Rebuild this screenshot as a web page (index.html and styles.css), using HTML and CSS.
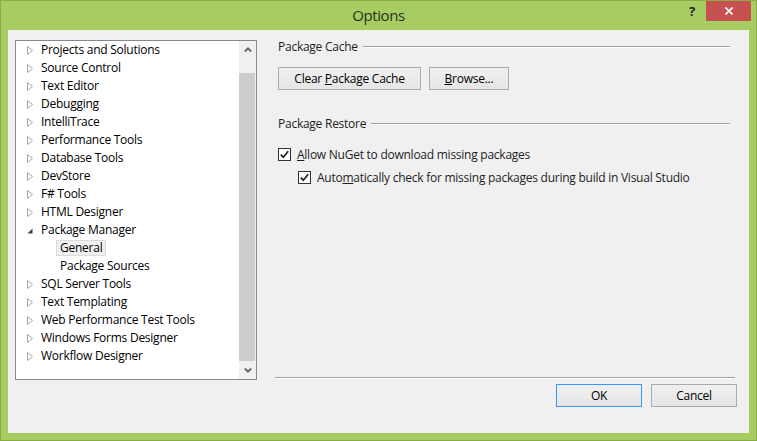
FILE: index.html
```html
<!DOCTYPE html>
<html lang="en">
<head>
    <meta charset="UTF-8">
    <meta name="viewport" content="width=device-width, initial-scale=1.0">
    <title>Options</title>
    <link rel="stylesheet" href="styles.css">
</head>
<body>

    <div class="window">
        <div class="titlebar">
            <span></span>
            <span class="title">Options</span>
            <div class="caption-buttons">
                <span class="help">?</span>
                <span class="close">
                    <svg width="8" height="8" viewBox="0 0 8 8"><path d="M0.5 0.5 L7.5 7.5 M7.5 0.5 L0.5 7.5" stroke="#fff" stroke-width="1.6"/></svg>
                </span>
            </div>
        </div>

        <div class="client">
            <div class="main">
                <!-- Options tree -->
                <div class="tree">
                    <ul class="tree-items">
                        <li class="node"><span class="expander"><svg width="6" height="9" viewBox="0 0 6 9"><path d="M0.5 0.5 L5.5 4.5 L0.5 8.5 Z" fill="#fff" stroke="#a6a6a6"/></svg></span>Projects and Solutions</li>
                        <li class="node"><span class="expander"><svg width="6" height="9" viewBox="0 0 6 9"><path d="M0.5 0.5 L5.5 4.5 L0.5 8.5 Z" fill="#fff" stroke="#a6a6a6"/></svg></span>Source Control</li>
                        <li class="node"><span class="expander"><svg width="6" height="9" viewBox="0 0 6 9"><path d="M0.5 0.5 L5.5 4.5 L0.5 8.5 Z" fill="#fff" stroke="#a6a6a6"/></svg></span>Text Editor</li>
                        <li class="node"><span class="expander"><svg width="6" height="9" viewBox="0 0 6 9"><path d="M0.5 0.5 L5.5 4.5 L0.5 8.5 Z" fill="#fff" stroke="#a6a6a6"/></svg></span>Debugging</li>
                        <li class="node"><span class="expander"><svg width="6" height="9" viewBox="0 0 6 9"><path d="M0.5 0.5 L5.5 4.5 L0.5 8.5 Z" fill="#fff" stroke="#a6a6a6"/></svg></span>IntelliTrace</li>
                        <li class="node"><span class="expander"><svg width="6" height="9" viewBox="0 0 6 9"><path d="M0.5 0.5 L5.5 4.5 L0.5 8.5 Z" fill="#fff" stroke="#a6a6a6"/></svg></span>Performance Tools</li>
                        <li class="node"><span class="expander"><svg width="6" height="9" viewBox="0 0 6 9"><path d="M0.5 0.5 L5.5 4.5 L0.5 8.5 Z" fill="#fff" stroke="#a6a6a6"/></svg></span>Database Tools</li>
                        <li class="node"><span class="expander"><svg width="6" height="9" viewBox="0 0 6 9"><path d="M0.5 0.5 L5.5 4.5 L0.5 8.5 Z" fill="#fff" stroke="#a6a6a6"/></svg></span>DevStore</li>
                        <li class="node"><span class="expander"><svg width="6" height="9" viewBox="0 0 6 9"><path d="M0.5 0.5 L5.5 4.5 L0.5 8.5 Z" fill="#fff" stroke="#a6a6a6"/></svg></span>F# Tools</li>
                        <li class="node"><span class="expander"><svg width="6" height="9" viewBox="0 0 6 9"><path d="M0.5 0.5 L5.5 4.5 L0.5 8.5 Z" fill="#fff" stroke="#a6a6a6"/></svg></span>HTML Designer</li>
                        <li class="node"><span class="expander"><svg width="6" height="6" viewBox="0 0 6 6"><path d="M5.5 0.5 L5.5 5.5 L0.5 5.5 Z" fill="#404040"/></svg></span>Package Manager</li>
                        <li class="node child"><span class="label selected">General</span></li>
                        <li class="node child"><span class="label">Package Sources</span></li>
                        <li class="node"><span class="expander"><svg width="6" height="9" viewBox="0 0 6 9"><path d="M0.5 0.5 L5.5 4.5 L0.5 8.5 Z" fill="#fff" stroke="#a6a6a6"/></svg></span>SQL Server Tools</li>
                        <li class="node"><span class="expander"><svg width="6" height="9" viewBox="0 0 6 9"><path d="M0.5 0.5 L5.5 4.5 L0.5 8.5 Z" fill="#fff" stroke="#a6a6a6"/></svg></span>Text Templating</li>
                        <li class="node"><span class="expander"><svg width="6" height="9" viewBox="0 0 6 9"><path d="M0.5 0.5 L5.5 4.5 L0.5 8.5 Z" fill="#fff" stroke="#a6a6a6"/></svg></span>Web Performance Test Tools</li>
                        <li class="node"><span class="expander"><svg width="6" height="9" viewBox="0 0 6 9"><path d="M0.5 0.5 L5.5 4.5 L0.5 8.5 Z" fill="#fff" stroke="#a6a6a6"/></svg></span>Windows Forms Designer</li>
                        <li class="node"><span class="expander"><svg width="6" height="9" viewBox="0 0 6 9"><path d="M0.5 0.5 L5.5 4.5 L0.5 8.5 Z" fill="#fff" stroke="#a6a6a6"/></svg></span>Workflow Designer</li>
                    </ul>
                    <div class="scrollbar">
                        <span class="arrow"><svg width="8" height="5" viewBox="0 0 8 5"><path d="M0.8 4.5 L4 1.3 L7.2 4.5" fill="none" stroke="#606060" stroke-width="1.8"/></svg></span>
                        <div class="track"><div class="thumb"></div></div>
                        <span class="arrow"><svg width="8" height="5" viewBox="0 0 8 5"><path d="M0.8 0.5 L4 3.7 L7.2 0.5" fill="none" stroke="#606060" stroke-width="1.8"/></svg></span>
                    </div>
                </div>

                <!-- Package Manager / General page -->
                <div class="page">
                    <div class="group-title"><span>Package Cache</span><span class="rule"></span></div>
                    <div class="button-row">
                        <button class="btn btn-clear">Clear <u>P</u>ackage Cache</button>
                        <button class="btn btn-browse"><u>B</u>rowse...</button>
                    </div>

                    <div class="group-title restore"><span>Package Restore</span><span class="rule"></span></div>
                    <label class="check first">
                        <span class="box"><svg width="11" height="11" viewBox="0 0 11 11"><path d="M1.8 5.6 L4.3 8.2 L9.2 2.2" fill="none" stroke="#222" stroke-width="1.7"/></svg></span>
                        <span><u>A</u>llow NuGet to download missing packages</span>
                    </label>
                    <label class="check nested">
                        <span class="box"><svg width="11" height="11" viewBox="0 0 11 11"><path d="M1.8 5.6 L4.3 8.2 L9.2 2.2" fill="none" stroke="#222" stroke-width="1.7"/></svg></span>
                        <span>Auto<u>m</u>atically check for missing packages during build in Visual Studio</span>
                    </label>

                    <div class="separator"></div>
                </div>
            </div>

            <div class="dialog-buttons">
                <button class="btn btn-default">OK</button>
                <button class="btn">Cancel</button>
            </div>
        </div>
    </div>

</body>
</html>
```

FILE: styles.css
```css
/* Windows 8 style Options dialog */
* {
    box-sizing: border-box;
}
body {
    margin: 0;
    font-family: "Segoe UI", "Open Sans", "Noto Sans", sans-serif;
    font-size: 12px;
    letter-spacing: -0.25px;
    color: #000;
}
.window {
    width: 757px;
    height: 441px;
    background-color: #a7cd62;
    border: 1px solid #88ad48;
}
.titlebar {
    height: 29px;
    display: grid;
    grid-template-columns: 1fr auto 1fr;
}
.title {
    font-size: 15px;
    letter-spacing: -0.4px;
    line-height: 28px;
    color: #27321c;
}
.caption-buttons {
    display: flex;
    justify-content: flex-end;
    align-items: flex-start;
    padding-right: 5px;
}
.help {
    font-weight: bold;
    font-size: 13px;
    line-height: 20px;
    color: #222;
    margin-right: 11px;
}
.close {
    width: 45px;
    height: 20px;
    background-color: #c75050;
    display: flex;
    align-items: center;
    justify-content: center;
}
.client {
    margin: 0 7px;
    height: 403px;
    background-color: #f0f0f0;
}
.main {
    display: flex;
    gap: 18px;
    height: 350px;
    padding: 10px 14px 0 7px;
}

/* Tree view */
.tree {
    width: 242px;
    height: 340px;
    border: 1px solid #828790;
    background-color: #fff;
    display: flex;
}
.tree-items {
    list-style: none;
    margin: 0;
    padding: 0;
    flex: 1;
}
.node {
    height: 18px;
    display: flex;
    align-items: center;
    padding-left: 11px;
    padding-bottom: 2px;
    white-space: nowrap;
}
.expander {
    width: 14px;
    display: flex;
    align-items: center;
    padding-top: 3px;
}
.node.child {
    padding-left: 40px;
    padding-bottom: 0;
}
.label {
    height: 16px;
    line-height: 13px;
    padding: 0 3px;
    border: 1px solid transparent;
}
.label.selected {
    background-color: #f0f0f0;
    border-color: #dadada;
}
.scrollbar {
    width: 17px;
    background-color: #f0f0f0;
    display: flex;
    flex-direction: column;
}
.arrow {
    height: 17px;
    display: flex;
    align-items: center;
    justify-content: center;
}
.track {
    flex: 1;
    padding-top: 15px;
}
.thumb {
    height: 288px;
    margin: 0 1px 0 0;
    background-color: #cdcdcd;
}

/* Options page */
.page {
    width: 460px;
    height: 340px;
    display: flex;
    flex-direction: column;
    color: #1e1e1e;
}
.group-title {
    display: flex;
    align-items: center;
    line-height: 13px;
    padding-left: 3px;
}
.group-title.restore {
    margin-top: 27px;
}
.rule {
    flex: 1;
    height: 2px;
    margin: 0 5px 0 5px;
    border-top: 1px solid #a0a0a0;
    border-bottom: 1px solid #fff;
}
.button-row {
    display: flex;
    gap: 8px;
    margin-top: 14px;
    padding-left: 3px;
}
.btn {
    font-family: inherit;
    font-size: 12px;
    letter-spacing: -0.25px;
    color: #000;
    height: 23px;
    padding: 0;
    border: 1px solid #acacac;
    background: linear-gradient(#f0f0f0, #e5e5e5);
}
.btn-clear {
    width: 143px;
}
.btn-browse {
    width: 80px;
}
.check {
    display: flex;
    align-items: center;
    gap: 6px;
    height: 17px;
}
.check.first {
    margin-top: 16px;
    padding-left: 3px;
}
.check.nested {
    margin-top: 6px;
    padding-left: 23px;
}
.box {
    width: 13px;
    height: 13px;
    border: 1px solid #333;
    background-color: #fff;
    display: flex;
    align-items: center;
    justify-content: center;
}
.separator {
    margin-top: auto;
    margin-bottom: 1px;
    height: 2px;
    border-top: 1px solid #a0a0a0;
    border-bottom: 1px solid #fff;
}
.dialog-buttons {
    display: flex;
    justify-content: flex-end;
    gap: 9px;
    padding: 4px 12px 0 0;
}
.dialog-buttons .btn {
    width: 86px;
}
.btn-default {
    border-color: #3399ff;
}
```
